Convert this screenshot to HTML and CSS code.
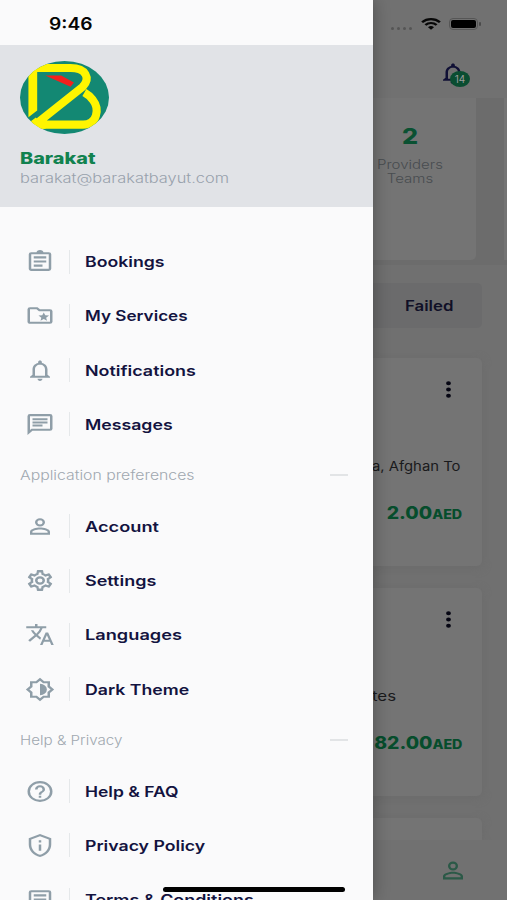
FILE: index.html
```html
<!DOCTYPE html>
<html lang="en">
<head>
<meta charset="utf-8">
<title>Barakat</title>
<link rel="stylesheet" href="styles.css">
</head>
<body>
<svg class="defs" width="0" height="0">
  <symbol id="person" viewBox="0 0 24 24" preserveAspectRatio="none"><path d="M12 5.9a2.1 2.1 0 1 1 0 4.2 2.1 2.1 0 0 1 0-4.2m0 9c2.97 0 6.1 1.46 6.1 2.1v1.1H5.9V17c0-.64 3.13-2.1 6.1-2.1M12 4a4 4 0 1 0 0 8 4 4 0 0 0 0-8zm0 9c-2.67 0-8 1.34-8 4v3h16v-3c0-2.66-5.33-4-8-4z"/></symbol>
  <symbol id="bell" viewBox="0 0 24 24" preserveAspectRatio="none"><path d="M12 22c1.1 0 2-.9 2-2h-4c0 1.1.9 2 2 2zm6-6v-5c0-3.07-1.63-5.64-4.5-6.32V4c0-.83-.67-1.5-1.5-1.5s-1.5.67-1.5 1.5v.68C7.64 5.36 6 7.92 6 11v5l-2 2v1h16v-1l-2-2zm-2 1H8v-6c0-2.48 1.51-4.5 4-4.5s4 2.02 4 4.5v6z"/></symbol>
  <symbol id="more" viewBox="0 0 24 24" preserveAspectRatio="none"><path d="M12 8a2 2 0 1 0 0-4 2 2 0 0 0 0 4zm0 2a2 2 0 1 0 0 4 2 2 0 0 0 0-4zm0 6a2 2 0 1 0 0 4 2 2 0 0 0 0-4z"/></symbol>
</svg>
<main class="screen">
  <header class="topbar">
    <div class="status">
      <span class="signal"><i></i><i></i><i></i><i></i></span>
      <svg class="wifi" viewBox="0 0 20 14" preserveAspectRatio="none"><path d="M10 13.6 13 10.7a4.4 4.4 0 0 0-6 0zM3.5 7.2l1.8 1.8a6.8 6.8 0 0 1 9.4 0l1.8-1.8a9.4 9.4 0 0 0-13 0zM.2 4 2 5.8a11.6 11.6 0 0 1 16 0L19.800 4a14.200 14.200 0 0 0-19.600 0z"/></svg>
      <span class="battery"><b></b></span>
    </div>
    <div class="alerts"><svg class="bell"><use href="#bell"/></svg><span class="badge">14</span></div>
  </header>
  <section class="stats">
    <div class="stat"><strong>2</strong><span>Providers<br>Teams</span></div>
    <div class="stat next"></div>
  </section>
  <nav class="tabs"><span class="tab"><em>Failed</em></span></nav>
  <article class="booking first">
    <svg class="more"><use href="#more"/></svg>
    <p class="detail address"><span>a, Afghan To</span></p>
    <p class="price"><span>2.00<small>AED</small></span></p>
  </article>
  <article class="booking second">
    <svg class="more"><use href="#more"/></svg>
    <p class="detail minutes"><span>tes</span></p>
    <p class="price"><span>82.00<small>AED</small></span></p>
  </article>
  <article class="booking last"></article>
  <footer class="bottom"><svg class="profile"><use href="#person"/></svg></footer>
</main>
<aside class="drawer">
  <div class="clock"><span>9:46</span></div>
  <div class="account">
    <svg class="logo" viewBox="33 33 264 218" preserveAspectRatio="none">
      <clipPath id="oval"><ellipse cx="165" cy="142" rx="132" ry="109"/></clipPath>
      <g clip-path="url(#oval)">
        <path fill="#138873" d="M33 33h264v218H33z"/>
        <path fill="none" stroke="#fff500" stroke-width="24" stroke-linejoin="bevel" d="M71 54H183C228 54 244 84 218 111L78 223H220C262 223 270 176 249 149Q240 136 224 127"/>
        <path fill="#fff500" d="M58 54h26v127L58 201zM60 217l20-15 30 33H80z"/>
        <path fill="#f3201d" d="M108 76h47l38 21-10 13z"/>
      </g>
    </svg>
    <span class="name">Barakat</span>
    <span class="email">barakat@barakatbayut.com</span>
  </div>
  <nav class="menu">
    <a class="item"><svg viewBox="0 0 24 24" preserveAspectRatio="none"><path d="M7 15h7v2H7zm0-4h10v2H7zm0-4h10v2H7zm12-4h-4.180C14.400 1.840 13.300 1 12 1s-2.400.84-2.820 2H5a2 2 0 0 0-2 2v14c0 1.100.9 2 2 2h14a2 2 0 0 0 2-2V5a2 2 0 0 0-2-2zm0 16H5V5h14z"/></svg><span class="w-bookings">Bookings</span></a>
    <a class="item"><svg viewBox="0 0 24 24" preserveAspectRatio="none"><path d="M20 6h-8l-2-2H4a2 2 0 0 0-2 2v12c0 1.100.9 2 2 2h16a2 2 0 0 0 2-2V8a2 2 0 0 0-2-2zm0 12H4V6h5.170l2 2H20zm-6.920-3.960L12.390 17 15 15.470 17.610 17l-.69-2.960 2.300-1.990-3.030-.26L15 9l-1.190 2.790-3.030.26z"/></svg><span class="w-services">My Services</span></a>
    <a class="item"><svg><use href="#bell"/></svg><span class="w-notifications">Notifications</span></a>
    <a class="item"><svg viewBox="0 0 24 24" preserveAspectRatio="none"><path d="M4 4h16v12H5.170L4 17.170zm0-2a2 2 0 0 0-2 2v18l4-4h14a2 2 0 0 0 2-2V4a2 2 0 0 0-2-2zm2 10h8v2H6zm0-3h12v2H6zm0-3h12v2H6z"/></svg><span class="w-messages">Messages</span></a>
    <h2 class="group"><span class="w-prefs">Application preferences</span></h2>
    <a class="item"><svg><use href="#person"/></svg><span class="w-account">Account</span></a>
    <a class="item"><svg viewBox="0 0 24 24" preserveAspectRatio="none"><path d="M19.430 12.980c.04-.32.07-.64.07-.98s-.03-.66-.07-.98l2.110-1.650c.19-.15.24-.42.12-.64l-2-3.460a.5.5 0 0 0-.61-.22l-2.490 1a7.300 7.300 0 0 0-1.690-.98l-.38-2.650A.49.49 0 0 0 14 2h-4c-.25 0-.46.18-.49.42l-.38 2.650c-.61.25-1.170.59-1.690.98l-2.490-1a.5.5 0 0 0-.61.220l-2 3.460c-.13.220-.07.490.12.640l2.110 1.650a7.900 7.900 0 0 0 0 1.960l-2.110 1.650c-.19.150-.24.420-.12.640l2 3.460c.12.220.38.300.61.220l2.490-1c.52.400 1.080.730 1.690.980l.38 2.650c.03.240.24.420.49.420h4c.25 0 .46-.18.49-.42l.38-2.650c.61-.25 1.170-.59 1.690-.98l2.490 1c.23.090.49 0 .61-.22l2-3.460a.5.5 0 0 0-.12-.64zm-1.980-1.710c.07.540.07.920 0 1.460l-.14 1.130 1.890 1.480-.7 1.210-2.190-.88-.97.730c-.35.26-.68.45-1.060.61l-1.060.430-.32 2.260h-1.800l-.32-2.260-1.060-.43c-.4-.17-.72-.36-1.040-.6l-.98-.74-2.190.88-.7-1.210 1.890-1.480-.14-1.130c-.07-.56-.07-.89 0-1.460l.14-1.130-1.890-1.480.7-1.210 2.190.88.97-.73c.35-.26.68-.45 1.060-.61l1.060-.43.32-2.260h1.800l.32 2.260 1.060.430c.4.170.72.360 1.040.6l.98.740 2.190-.88.7 1.210-1.890 1.480zM12 8a4 4 0 1 0 0 8 4 4 0 0 0 0-8zm0 6a2 2 0 1 1 0-4 2 2 0 0 1 0 4z"/></svg><span class="w-settings">Settings</span></a>
    <a class="item"><svg viewBox="0 0 24 24" preserveAspectRatio="none"><path d="m12.870 15.070-2.540-2.510.03-.03A17.500 17.500 0 0 0 14.070 6H17V4h-7V2H8v2H1v2h11.170A15.700 15.700 0 0 1 9 11.350 15.600 15.600 0 0 1 6.690 8h-2a17.600 17.600 0 0 0 2.980 4.560l-5.090 5.020L4 19l5-5 3.110 3.110zM18.500 10h-2L12 22h2l1.120-3h4.750L21 22h2zm-2.620 7 1.620-4.330L19.120 17z"/></svg><span class="w-languages">Languages</span></a>
    <a class="item"><svg viewBox="0 0 24 24" preserveAspectRatio="none"><path d="M20 8.690V4h-4.690L12 .69 8.690 4H4v4.690L.69 12 4 15.310V20h4.690L12 23.310 15.310 20H20v-4.690L23.310 12zm-2 5.790V18h-3.520L12 20.480 9.520 18H6v-3.520L3.520 12 6 9.520V6h3.520L12 3.520 14.480 6H18v3.520L20.480 12zM12 6.500v11a5.500 5.500 0 0 0 0-11z"/></svg><span class="w-theme">Dark Theme</span></a>
    <h2 class="group"><span class="w-help">Help &amp; Privacy</span></h2>
    <a class="item"><svg viewBox="0 0 24 24" preserveAspectRatio="none"><path d="M11 18h2v-2h-2zm1-16a10 10 0 1 0 0 20 10 10 0 0 0 0-20zm0 18a8 8 0 1 1 0-16 8 8 0 0 1 0 16zm0-14a4 4 0 0 0-4 4h2a2 2 0 1 1 4 0c0 2-3 1.750-3 5h2c0-2.250 3-2.500 3-5a4 4 0 0 0-4-4z"/></svg><span class="w-faq">Help &amp; FAQ</span></a>
    <a class="item"><svg viewBox="0 0 24 24" preserveAspectRatio="none"><path d="M12 1 3 5v6c0 5.550 3.840 10.740 9 12 5.160-1.260 9-6.450 9-12V5zm7 10c0 4.520-2.980 8.690-7 9.930-4.020-1.240-7-5.410-7-9.930V6.300l7-3.110 7 3.110zM11 7h2v2h-2zm0 4h2v6h-2z"/></svg><span class="w-privacy">Privacy Policy</span></a>
    <a class="item"><svg viewBox="0 0 24 24" preserveAspectRatio="none"><path d="M19 5v14H5V5zm0-2H5a2 2 0 0 0-2 2v14c0 1.100.9 2 2 2h14a2 2 0 0 0 2-2V5a2 2 0 0 0-2-2zM7 15h7v2H7zm0-4h10v2H7zm0-4h10v2H7z"/></svg><span class="w-terms">Terms &amp; Conditions</span></a>
  </nav>
</aside>
<div class="home"></div>
</body>
</html>
```
FILE: styles.css
```css
* { box-sizing: border-box; }
body {
  margin: 0;
  position: relative;
  width: 507px;
  height: 900px;
  overflow: hidden;
  background: #707070;
  font-family: Inter, "Open Sans", sans-serif;
  color: #13133c;
}
.defs { position: absolute; }
svg { display: block; fill: currentColor; }

/* Drawer */
.drawer {
  position: absolute;
  inset: 0 auto 0 0;
  width: 372.500px;
  height: 900px;
  overflow: hidden;
  background: #fafafb;
  box-shadow: 0 0 16px 0 rgba(0, 0, 0, .32);
}
.clock {
  height: 45px;
  padding: 14px 0 0 49px;
  font: 600 17px/21px Inter, sans-serif;
  color: #050505;
}
.clock span { display: inline-block; transform: scaleX(1.13); transform-origin: 0 50%; }
.account {
  height: 162px;
  padding: 16px 20px 0;
  background: #e1e3e7;
}
.logo { width: 89px; height: 73px; }
.name, .email { display: block; width: max-content; transform-origin: 0 50%; white-space: nowrap; }
.name {
  margin-top: 14px;
  font-size: 15.500px;
  line-height: 21px;
  font-weight: 800;
  color: #11824f;
  transform: scaleX(1.28);
}
.email {
  font-size: 13px;
  line-height: 18px;
  font-weight: 300;
  color: #98a1ac;
  transform: scaleX(1.26);
}
.menu { padding-top: 27.400px; }
.item {
  display: flex;
  align-items: center;
  height: 54.250px;
  padding-left: 25px;
  color: #13133f;
}
.item svg { order: 1; width: 30px; height: 25px; color: #8f9ea8; flex: none; }
.item::before { content: ""; order: 2; width: 1px; height: 24px; margin: 0 15px 0 14px; background: #e5e8ea; }
.item span {
  order: 3;
  font-size: 14.500px;
  font-weight: 600;
  white-space: nowrap;
  transform: scaleX(1.22);
  transform-origin: 0 50%;
}
.item .w-services { transform: scaleX(1.18); }
.item .w-notifications { transform: scaleX(1.235); }
.item .w-account, .item .w-languages { transform: scaleX(1.255); }
.item .w-settings { transform: scaleX(1.24); }
.item .w-terms { transform: scaleX(1.235); }
.item .w-faq { transform: scaleX(1.205); }
.group {
  display: flex;
  align-items: center;
  justify-content: space-between;
  height: 47.800px;
  margin: 0;
  padding: 0 25px 0 20px;
  font-size: 13px;
  font-weight: 300;
  color: #a0a8b0;
}
.group span { transform: scaleX(1.215); transform-origin: 0 50%; white-space: nowrap; }
.group .w-help { transform: scaleX(1.165); }
.group::after { content: ""; width: 18px; height: 2px; background: #e2e4e6; }
.home {
  position: absolute;
  left: 163px;
  bottom: 8px;
  width: 182px;
  height: 5px;
  border-radius: 3px;
  background: #000;
}

/* Dimmed screen behind the drawer */
.screen { display: flex; flex-direction: column; height: 900px; padding-left: 372px; overflow: hidden; }
.topbar { height: 98px; background: #717171; flex: none; }
.status { display: flex; align-items: center; height: 47px; padding-left: 19px; }
.signal { display: flex; gap: 3px; padding-top: 9px; }
.signal i { width: 3px; height: 3px; border-radius: 50%; background: #555; }
.wifi { width: 20px; height: 12px; margin-left: 9px; color: #070707; }
.battery {
  position: relative;
  width: 29px;
  height: 12px;
  margin-left: 8px;
  padding: 1px;
  border: 1px solid #565656;
  border-radius: 4px;
}
.battery b { display: block; height: 8px; border-radius: 2px; background: #000; }
.battery::after { content: ""; position: absolute; right: -4px; top: 3px; width: 2px; height: 4px; background: #4b4b4b; border-radius: 1px; }
.alerts { position: relative; width: 30px; margin: 14px 0 0 66px; }
.bell { width: 30px; height: 25px; color: #101035; }
.badge {
  position: absolute;
  left: 12px;
  top: 10px;
  width: 20px;
  height: 16px;
  border-radius: 50%;
  background: #0a4d31;
  color: #9c9c9c;
  font-size: 10px;
  line-height: 16px;
  text-align: center;
}
.stats { display: flex; gap: 28px; height: 167px; background: #6c6c6c; flex: none; overflow: hidden; }
.stat { width: 104px; height: 162px; padding-top: 24px; background: #747474; border-radius: 0 0 5px 0; flex: none; }
.stat strong, .stat span { display: block; width: 76px; text-align: center; transform: scaleX(1.2); }
.stat strong { font-size: 21px; line-height: 30px; font-weight: 800; color: #0a5132; }
.stat span { margin-top: 6px; font-size: 12.500px; line-height: 14px; font-weight: 300; color: #484c50; }
.tabs { padding-top: 18px; height: 93px; flex: none; }
.tab {
  display: flex;
  align-items: center;
  height: 45px;
  width: 110px;
  padding-left: 33px;
  border-radius: 0 5px 5px 0;
  background: #6b6b6c;
}
.tab em { font-size: 14px; font-style: normal; font-weight: 600; transform: scaleX(1.2); transform-origin: 0 50%; color: #101027; }
.booking {
  position: relative;
  width: 110px;
  margin-bottom: 22px;
  border-radius: 0 5px 5px 0;
  background: #747474;
  box-shadow: 0 2px 9px #6b6b6b;
  flex: none;
}
.first { height: 208px; }
.second { height: 208px; }
.last { height: 22px; margin: 0; border-radius: 0 5px 0 0; }
.booking .more { width: 29px; height: 25px; margin-left: 62px; color: #060613; transform: translateY(19px); }
.detail { margin: 0; padding-top: 74px; font-size: 13px; line-height: 18px; color: #1a1a1c; white-space: nowrap; overflow: hidden; height: 92px; }
.detail span { display: inline-block; transform: scaleX(1.14); transform-origin: 0 50%; }
.minutes span { transform: scaleX(1.3); }
.price { margin: 0; padding: 26px 20px 0 0; text-align: right; font-size: 17px; line-height: 24px; font-weight: 800; color: #064d2c; }
.price span { display: inline-block; transform: scaleX(1.14); transform-origin: 100% 50%; }
.price small { font-size: 12.500px; }
.bottom { flex: 1; padding: 17px 0 0 66px; background: #717171; z-index: 0; }
.profile { width: 30px; height: 27px; color: #2b5947; }
```
